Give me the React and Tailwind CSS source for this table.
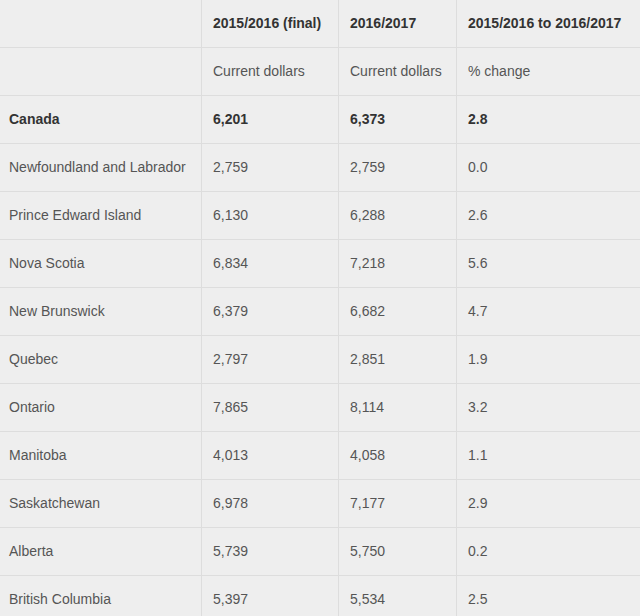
const rows = [
  ["Newfoundland and Labrador", "2,759", "2,759", "0.0"],
  ["Prince Edward Island", "6,130", "6,288", "2.6"],
  ["Nova Scotia", "6,834", "7,218", "5.6"],
  ["New Brunswick", "6,379", "6,682", "4.7"],
  ["Quebec", "2,797", "2,851", "1.9"],
  ["Ontario", "7,865", "8,114", "3.2"],
  ["Manitoba", "4,013", "4,058", "1.1"],
  ["Saskatchewan", "6,978", "7,177", "2.9"],
  ["Alberta", "5,739", "5,750", "0.2"],
  ["British Columbia", "5,397", "5,534", "2.5"],
];

const Row = ({ cells, bold }) => (
  <div className={`flex h-[48px] border-b border-[#dddddd] ${bold ? "font-bold text-[#333333]" : "text-[#555555]"}`}>
    <div className="w-[202px] shrink-0 border-r border-[#dddddd] pl-[9px] flex items-center">{cells[0]}</div>
    <div className="w-[137px] shrink-0 border-r border-[#dddddd] pl-[11px] flex items-center">{cells[1]}</div>
    <div className="w-[118px] shrink-0 border-r border-[#dddddd] pl-[11px] flex items-center">{cells[2]}</div>
    <div className="flex-1 pl-[11px] flex items-center whitespace-nowrap">{cells[3]}</div>
  </div>
);

export default function App() {
  return (
    <div className="w-[640px] h-[616px] overflow-hidden bg-[#eeeeee] text-[14px] font-['Liberation_Sans',Arial,sans-serif]">
      <Row bold cells={["", "2015/2016 (final)", "2016/2017", "2015/2016 to 2016/2017"]} />
      <Row cells={["", "Current dollars", "Current dollars", "% change"]} />
      <Row bold cells={["Canada", "6,201", "6,373", "2.8"]} />
      {rows.map((r) => (
        <Row key={r[0]} cells={r} />
      ))}
    </div>
  );
}
